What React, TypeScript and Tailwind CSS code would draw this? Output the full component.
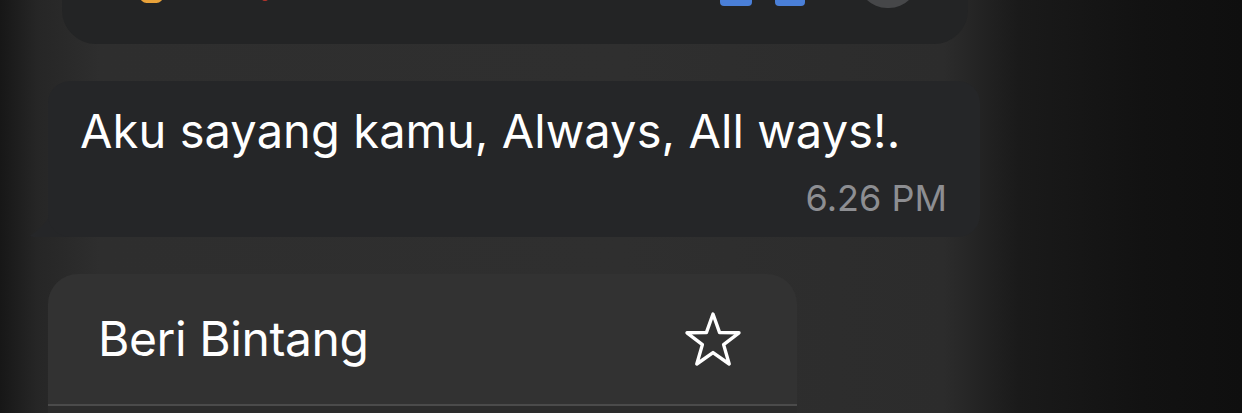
export default function App() {
  return (
    <div className="w-[1242px] h-[413px] overflow-hidden bg-[linear-gradient(to_right,#171717_0%,#262626_3%,#2e2e2e_8%,#2f2f2f_50%,#2c2c2c_76%,#1a1a1a_82%,#121212_92%,#0f0f0f_100%)] font-['Inter',sans-serif] flex flex-col">
      {/* bottom of previous message card */}
      <div className="relative ml-[62px] w-[906px] h-[44px] rounded-b-[34px] bg-[#232425] overflow-hidden shrink-0">
        <div className="absolute left-[78px] top-[-10px] w-[23px] h-[13px] rounded-full bg-[#e8a23a]" />
        <div className="absolute left-[200px] top-[-4px] w-[6px] h-[5px] rounded-full bg-[#b3342c]" />
        <div className="absolute left-[658px] top-[-10px] w-[32px] h-[16px] rounded-b-[4px] bg-[#4a7fd8]" />
        <div className="absolute left-[713px] top-[-10px] w-[30px] h-[16px] rounded-b-[4px] bg-[#4a7fd8]" />
        <div className="absolute left-[796px] top-[-50px] w-[60px] h-[58px] rounded-full bg-[#464749]" />
      </div>

      {/* message bubble */}
      <div className="relative mt-[37px] ml-[48px] w-[932px] h-[156px] shrink-0">
        <svg className="absolute left-[-20px] bottom-0" width="50" height="52" viewBox="0 0 50 52">
          <path d="M50 0 L28 0 C28 22 22 38 3 50 C1 51.5 4 52 8 52 L50 52 Z" fill="#252628" />
        </svg>
        <div className="relative h-full rounded-[22px] bg-[#252628] pl-[32px] pr-[33px] pt-[21px] flex flex-col">
          <p className="text-white text-[47px] leading-[58px] tracking-[0.1px]">Aku sayang kamu, Always, All ways!.</p>
          <p className="self-end mt-[16px] text-[#8d8e92] text-[36px] leading-[44px]">6.26 PM</p>
        </div>
      </div>

      {/* context menu */}
      <div className="mt-[37px] ml-[48px] w-[749px] rounded-t-[30px] bg-[#323232] shrink-0">
        <div className="h-[132px] flex items-center justify-between pl-[50px] pr-[55px] border-b-2 border-[#4b4b4b]">
          <span className="text-white text-[48px] tracking-[-0.4px]">Beri Bintang</span>
          <svg width="58" height="57" viewBox="0 0 58 57" fill="none">
            <path
              d="M29 3 L35.6 21.6 L55 21.8 L39.6 33.6 L45.2 53 L29 41.6 L12.8 53 L18.4 33.6 L3 21.8 L22.4 21.6 Z"
              stroke="#ffffff"
              strokeWidth="3.4"
              strokeLinejoin="round"
            />
          </svg>
        </div>
        <div className="h-[20px] bg-[#2c2c2c]" />
      </div>
    </div>
  );
}
